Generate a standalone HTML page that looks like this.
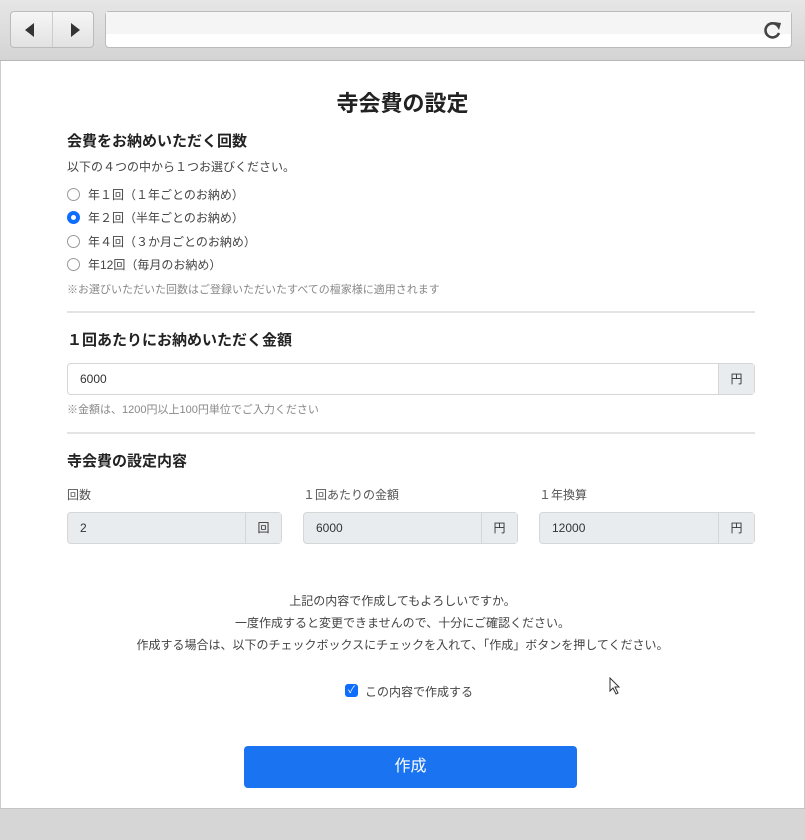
<!DOCTYPE html>
<html><head><meta charset="utf-8"><style>
*{margin:0;padding:0;box-sizing:border-box}
body{width:805px;height:840px;background:#fff;font-family:"Liberation Sans","Noto Sans CJK JP",sans-serif;color:#333;position:relative;overflow:hidden}
.a{position:absolute;white-space:nowrap}
.top{left:0;top:0;width:805px;height:61px;background:linear-gradient(#e6e6e6,#d4d4d4);border-bottom:1px solid #b8b8b8}
.nav{left:10px;top:11px;width:84px;height:37px;border:1px solid #bbb;border-radius:4px;background:linear-gradient(#f6f6f6,#e2e2e2)}
.url{left:105px;top:11px;width:687px;height:37px;border:1px solid #bbb;border-radius:4px;background:#fff}
.bot{left:0;top:808px;width:805px;height:32px;background:#d6d6d6;border-top:1px solid #c4c4c4}
.side{left:0;top:61px;width:805px;height:747px;border-left:1px solid #ccc;border-right:1px solid #ccc}
.h{font-size:15px;font-weight:bold;color:#222}
.s{font-size:12px;color:#444}
.n{font-size:11px;color:#888}
.rad{width:13px;height:13px;border:1px solid #999;border-radius:50%;background:#fff}
.hr{left:67px;width:688px;height:2px;background:#e4e4e4}
.box{height:32px;border:1px solid #d6d6d6;border-radius:4px;font-size:12px;color:#333;line-height:30px;padding-left:12px}
.suf{position:absolute;right:0;top:0;height:30px;width:36px;border-left:1px solid #d6d6d6;text-align:center;background:#e9ecef}
</style></head><body>
<div class="a top"></div>
<div class="a nav"><div style="position:absolute;left:41px;top:0;width:1px;height:35px;background:#ccc"></div>
<svg class="a" style="left:14px;top:11px" width="60" height="14"><path d="M0 7L9 0V14Z" fill="#333"/><path d="M46 0L55 7L46 14Z" fill="#333"/></svg></div>
<div class="a url"><div style="position:absolute;left:0;top:0;right:0;height:22px;background:#f5f5f5"></div>
<svg class="a" style="left:657px;top:8px" width="20" height="20" viewBox="0 0 20 20"><path d="M15 6A7 7 0 1 0 16 13" fill="none" stroke="#444" stroke-width="2.6"/><path d="M11 2L18 3L16 10Z" fill="#444"/></svg></div>
<div class="a side"></div>
<div class="a" style="left:0;width:805px;top:86px;text-align:center;font-size:22px;font-weight:bold;color:#222">寺会費の設定</div>
<div class="a h" style="left:67px;top:130px">会費をお納めいただく回数</div>
<div class="a s" style="left:67px;top:158px">以下の４つの中から１つお選びください。</div>
<div class="a rad" style="left:67px;top:188px"></div><div class="a s" style="left:88px;top:186px">年１回（１年ごとのお納め）</div>
<div class="a rad" style="left:67px;top:211px;border:4px solid #0d6efd"></div><div class="a s" style="left:88px;top:209px">年２回（半年ごとのお納め）</div>
<div class="a rad" style="left:67px;top:235px"></div><div class="a s" style="left:88px;top:233px">年４回（３か月ごとのお納め）</div>
<div class="a rad" style="left:67px;top:258px"></div><div class="a s" style="left:88px;top:256px">年12回（毎月のお納め）</div>
<div class="a n" style="left:67px;top:281px">※お選びいただいた回数はご登録いただいたすべての檀家様に適用されます</div>
<div class="a hr" style="top:311px"></div>
<div class="a h" style="left:67px;top:329px">１回あたりにお納めいただく金額</div>
<div class="a box" style="left:67px;top:363px;width:688px;background:#fff">6000<div class="suf">円</div></div>
<div class="a n" style="left:67px;top:401px">※金額は、1200円以上100円単位でご入力ください</div>
<div class="a hr" style="top:432px"></div>
<div class="a h" style="left:67px;top:450px">寺会費の設定内容</div>
<div class="a s" style="left:67px;top:486px;color:#555">回数</div>
<div class="a s" style="left:303px;top:486px;color:#555">１回あたりの金額</div>
<div class="a s" style="left:539px;top:486px;color:#555">１年換算</div>
<div class="a box" style="left:67px;top:512px;width:215px;background:#e9ecef">2<div class="suf">回</div></div>
<div class="a box" style="left:303px;top:512px;width:215px;background:#e9ecef">6000<div class="suf">円</div></div>
<div class="a box" style="left:539px;top:512px;width:216px;background:#e9ecef">12000<div class="suf">円</div></div>
<div class="a s" style="left:0;width:805px;text-align:center;top:590px;line-height:22px;white-space:normal">上記の内容で作成してもよろしいですか。<br>一度作成すると変更できませんので、十分にご確認ください。<br>作成する場合は、以下のチェックボックスにチェックを入れて、「作成」ボタンを押してください。</div>
<div class="a" style="left:345px;top:684px;width:13px;height:13px;background:#0d6efd;border-radius:3px;color:#fff;font-size:10px;line-height:13px;text-align:center">✓</div>
<div class="a s" style="left:365px;top:683px">この内容で作成する</div>
<svg class="a" style="left:609px;top:677px" width="12" height="18"><path d="M1 1V14L4 11L7 17L9 16L6 10H10Z" fill="#fff" stroke="#333"/></svg>
<div class="a" style="left:244px;top:746px;width:333px;height:42px;background:#1a73f0;border-radius:4px;color:#fff;font-size:16px;line-height:42px;text-align:center">作成</div>
<div class="a bot"></div>
</body></html>
